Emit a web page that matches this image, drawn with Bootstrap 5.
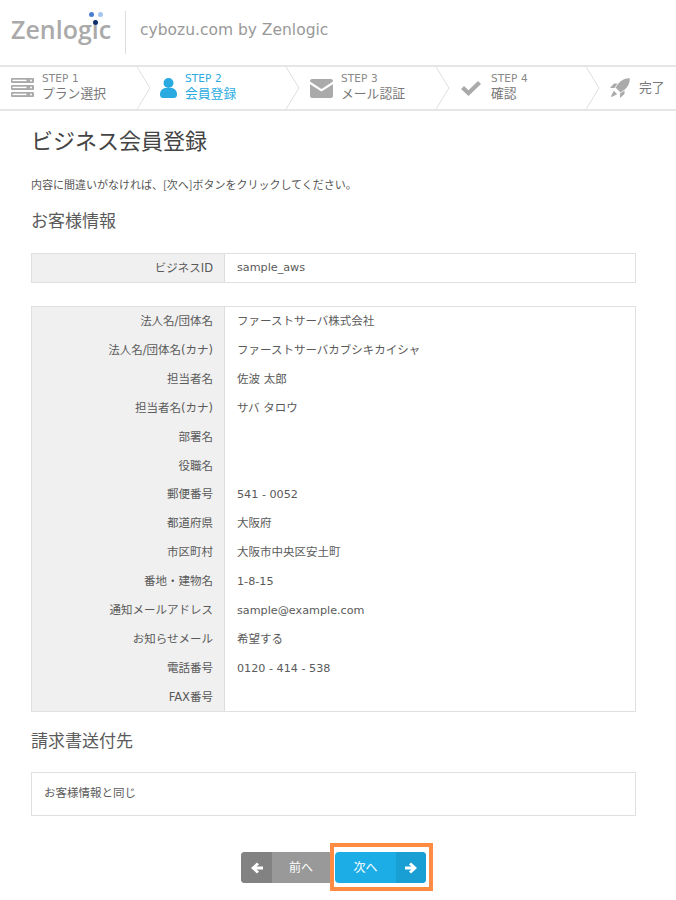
<!DOCTYPE html>
<html lang="ja">
<head>
<meta charset="utf-8">
<title>ビジネス会員登録</title>
<link rel="stylesheet" href="https://cdn.jsdelivr.net/npm/bootstrap@5.3.0/dist/css/bootstrap.min.css">
<style>
body{font-family:"DejaVu Sans","Noto Sans CJK JP",sans-serif;color:#5a5a5a;font-size:12px;background:#fff;width:676px;overflow-x:hidden}
.site-head{height:65px;padding-left:11px}
.logo-word{font-family:"Open Sans",sans-serif;font-weight:600;font-size:25px;color:#aaa;line-height:1;margin-top:17px}
.logo-wrap{width:114px;height:65px}
.logo-dot{position:absolute;border-radius:50%;width:5px;height:5px}
.head-sep{width:1px;height:43px;background:#ddd}
.head-name{font-size:15.5px;color:#999;padding-left:14px;margin-top:-3px}
.stepbar{height:46px;border-top:2px solid #e6e6e6;border-bottom:2px solid #e6e6e6;overflow:hidden}
.stepcell{height:42px;flex:none}
.chev{position:absolute;top:-1px;right:-14px;width:15px;height:44px}
.stepno{font-size:10.5px;line-height:12px;color:#888;letter-spacing:.1px;margin-top:-2px}
.stepname{font-family:"Noto Sans CJK JP",sans-serif;font-size:12.8px;line-height:18px;color:#777}
.tail-name{margin-top:-3px}
.is-on .stepno,.is-on .stepname{color:#29abe2}
.s1{width:137px;padding-left:11px}.s2{width:149px;padding-left:23px}.s3{width:150px;padding-left:24px}.s4{width:150px;padding-left:25px}.s5{width:90px;padding-left:24px}
.s1 svg.ic{margin-right:8px}.s2 svg.ic{margin-right:8px}.s3 svg.ic{margin-right:8px}.s4 svg.ic{margin-right:10px}.s5 svg.ic{margin-right:9px}
.pagebody{padding:0 40px 0 31px}
.pagetitle{font-family:"Noto Sans CJK JP",sans-serif;font-weight:400;font-size:22px;line-height:30px;color:#444;margin:13px 0 0}
.leadtext{font-family:"Noto Sans CJK JP",sans-serif;font-size:11px;line-height:16px;margin:22px 0 0;color:#555}
.subhead{font-family:"Noto Sans CJK JP",sans-serif;font-weight:400;font-size:17px;line-height:24px;color:#5a5a5a;margin:0}
.infotable{width:605px;table-layout:fixed;border:1px solid #e0e0e0;border-collapse:separate;border-spacing:0;margin:0}
.infotable th{width:193px;background:#f0f0f0;border-right:1px solid #ddd;text-align:right;font-weight:400;padding:1px 11px 0 0;font-size:11.5px;height:29px;white-space:nowrap}
.infotable td{padding:1px 0 0 12px;height:29px;font-size:11.5px;white-space:nowrap}
.infotable .tight-row th,.infotable .tight-row td{height:28px}
.infotable td.latin{font-size:11.2px}
.table-first{margin-top:21px}
.table-second{margin-top:23px}
.bill{width:605px;height:44px;border:1px solid #e0e0e0;padding-left:12px;font-size:11.5px;margin-top:20px}
.btnrow{margin-top:36px;padding-right:2px}
.btn-step{display:flex;align-items:stretch;height:31px;padding:0;border:0;border-radius:4px;overflow:hidden;color:#fff;font-size:12px;--bs-btn-color:#fff}
.btn-prev{width:89px;background:#999;border-radius:4px 0 0 4px}
.btn-next{width:91px;background:#1dade6}
.btn-prev .arr{width:31px;background:#828282}
.btn-next .arr{width:30px;background:#1a9fd4}
.arr{display:flex;align-items:center;justify-content:center;flex:none}
.btn-step .lbl{flex:1;display:flex;align-items:center;justify-content:center}
.callout{border:4px solid #ff8c42;padding:5px 3px 4px 1px;margin-top:-9px}
</style>
</head>
<body>
<header class="site-head d-flex align-items-center">
  <div class="logo-wrap position-relative flex-none">
    <div class="logo-word">Zenlogic</div>
    <span class="logo-dot" style="left:78px;top:12px;background:#4a80d0"></span>
    <span class="logo-dot" style="left:87px;top:12px;background:#a3c6ee"></span>
    <span class="logo-dot" style="left:82px;top:20px;background:#0d2f6e"></span>
  </div>
  <div class="head-sep"></div>
  <div class="head-name">cybozu.com by Zenlogic</div>
</header>

<nav class="stepbar d-flex">
  <div class="stepcell s1 d-flex align-items-center position-relative">
    <svg class="ic" width="23" height="20" viewBox="0 0 23 20"><g fill="#aaa"><rect y="0" width="23" height="5" rx="1"/><rect y="7" width="23" height="5" rx="1"/><rect y="14" width="23" height="5" rx="1"/></g><g fill="#fff"><rect x="1.5" y="1.700" width="14" height="1.4"/><rect x="1.500" y="8.700" width="14" height="1.4"/><rect x="1.500" y="15.700" width="14" height="1.4"/><circle cx="20" cy="2.500" r="1"/><circle cx="20" cy="9.500" r="1"/><circle cx="20" cy="16.500" r="1"/></g></svg>
    <div><div class="stepno">STEP 1</div><div class="stepname">プラン選択</div></div>
    <svg class="chev" viewBox="0 0 15 44"><path d="M.5 0 14 22 .5 44" fill="none" stroke="#e0e0e0"/></svg>
  </div>
  <div class="stepcell s2 is-on d-flex align-items-center position-relative">
    <svg class="ic" width="17" height="20" viewBox="0 0 17 20"><circle cx="8.5" cy="5" r="5" fill="#29abe2"/><path d="M0 16.5C0 12.5 2.500 10.500 5 10h7c2.500.5 5 2.500 5 6.500 0 2-1 3.500-3 3.500H3c-2 0-3-1.500-3-3.500Z" fill="#29abe2"/></svg>
    <div><div class="stepno">STEP 2</div><div class="stepname">会員登録</div></div>
    <svg class="chev" viewBox="0 0 15 44"><path d="M.5 0 14 22 .5 44" fill="none" stroke="#e0e0e0"/></svg>
  </div>
  <div class="stepcell s3 d-flex align-items-center position-relative">
    <svg class="ic" width="23" height="19" viewBox="0 0 23 19"><path d="M2 0h19c1 0 2 .8 2 2v.6L11.500 10 0 2.600V2C0 .8 1 0 2 0Z" fill="#aaa"/><path d="M0 5.300 11.500 12.600 23 5.300V17c0 1.200-1 2-2 2H2c-1 0-2-.8-2-2Z" fill="#aaa"/></svg>
    <div><div class="stepno">STEP 3</div><div class="stepname">メール認証</div></div>
    <svg class="chev" viewBox="0 0 15 44"><path d="M.5 0 14 22 .5 44" fill="none" stroke="#e0e0e0"/></svg>
  </div>
  <div class="stepcell s4 d-flex align-items-center position-relative">
    <svg class="ic" width="20" height="15" viewBox="0 0 20 15"><path d="M0 8 3 5 7.500 9.200 17 0l3 3L7.500 15Z" fill="#aaa"/></svg>
    <div><div class="stepno">STEP 4</div><div class="stepname">確認</div></div>
    <svg class="chev" viewBox="0 0 15 44"><path d="M.5 0 14 22 .5 44" fill="none" stroke="#e0e0e0"/></svg>
  </div>
  <div class="stepcell s5 d-flex align-items-center">
    <svg class="ic" width="20" height="20" viewBox="0 0 20 20"><g fill="#aaa"><path d="M19.800.2C15 .2 11.500 1.800 8.800 5L5.500 9.500 10.500 14.500 15 11.200C18.200 8.500 19.800 5 19.800.2Z"/><path d="M7.500 5.500H4L0 10h4.500Z"/><path d="M14.500 12.500V16L10 20v-4.500Z"/><path d="M3.800 12.800 7.200 16.200 1.500 19 .9 18.400Z"/></g></svg>
    <div class="stepname tail-name">完了</div>
  </div>
</nav>

<main class="pagebody">
  <h1 class="pagetitle">ビジネス会員登録</h1>
  <p class="leadtext">内容に間違いがなければ、[次へ]ボタンをクリックしてください。</p>
  <h2 class="subhead mt-3">お客様情報</h2>

  <table class="infotable table-first">
    <tr class="tight-row"><th>ビジネスID</th><td class="latin">sample_aws</td></tr>
  </table>

  <table class="infotable table-second">
    <tr><th>法人名/団体名</th><td>ファーストサーバ株式会社</td></tr>
    <tr><th>法人名/団体名(カナ)</th><td>ファーストサーバカブシキカイシャ</td></tr>
    <tr><th>担当者名</th><td>佐波 太郎</td></tr>
    <tr><th>担当者名(カナ)</th><td>サバ タロウ</td></tr>
    <tr><th>部署名</th><td></td></tr>
    <tr class="tight-row"><th>役職名</th><td></td></tr>
    <tr><th>郵便番号</th><td class="latin">541 - 0052</td></tr>
    <tr><th>都道府県</th><td>大阪府</td></tr>
    <tr><th>市区町村</th><td>大阪市中央区安土町</td></tr>
    <tr><th>番地・建物名</th><td class="latin">1-8-15</td></tr>
    <tr><th>通知メールアドレス</th><td class="latin">sample@example.com</td></tr>
    <tr><th>お知らせメール</th><td>希望する</td></tr>
    <tr><th>電話番号</th><td class="latin">0120 - 414 - 538</td></tr>
    <tr class="tight-row"><th>FAX番号</th><td></td></tr>
  </table>

  <h2 class="subhead mt-3">請求書送付先</h2>
  <div class="bill d-flex align-items-center">お客様情報と同じ</div>
</main>

<div class="btnrow d-flex justify-content-center align-items-start">
  <button type="button" class="btn btn-step btn-prev">
    <span class="arr"><svg width="12" height="12" viewBox="0 0 12 12"><path d="M6 .5 8 2.500 5.500 4.500H12v3H5.500L8 9.500 6 11.500 0 6Z" fill="#fff"/></svg></span>
    <span class="lbl">前へ</span>
  </button>
  <div class="callout">
    <button type="button" class="btn btn-step btn-next">
      <span class="lbl">次へ</span>
      <span class="arr"><svg width="12" height="12" viewBox="0 0 12 12"><path d="M6 .5 4 2.500 6.500 4.500H0v3h6.500L4 9.500 6 11.500 12 6Z" fill="#fff"/></svg></span>
    </button>
  </div>
</div>
<script src="https://cdn.jsdelivr.net/npm/bootstrap@5.3.0/dist/js/bootstrap.bundle.min.js"></script>
</body>
</html>
